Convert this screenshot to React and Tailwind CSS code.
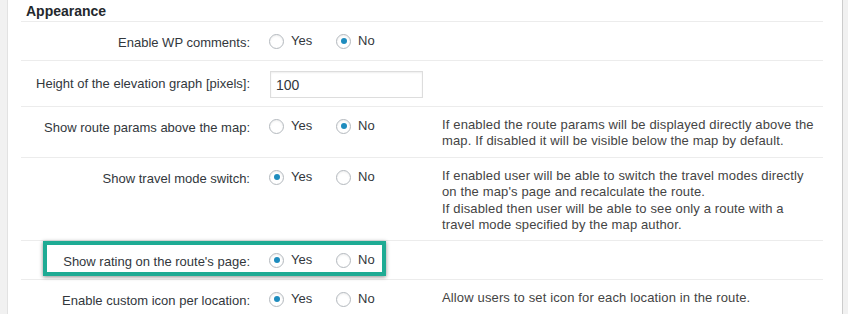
import React from "react";

const font = { fontFamily: '"Liberation Sans", Arial, sans-serif' };

function Radio({ checked }) {
    return (
        <span className="inline-flex h-[15px] w-[15px] items-center justify-center rounded-full border border-[#b4b9be] bg-white shadow-[inset_0_1px_2px_rgba(0,0,0,0.07)]">
            {checked && <span className="h-[6px] w-[6px] rounded-full bg-[#1e8cbe]" />}
        </span>
    );
}

function YesNo({ value }) {
    return (
        <div className="flex items-center">
            <label className="flex w-[67px] items-center gap-[7px]">
                <Radio checked={value === "yes"} />
                <span>Yes</span>
            </label>
            <label className="flex items-center gap-[7px]">
                <Radio checked={value === "no"} />
                <span>No</span>
            </label>
        </div>
    );
}

function Row({ label, height, children, desc, last }) {
    return (
        <div className={`flex ${height} ${last ? "" : "border-b border-[#ececec]"}`}>
            <div className="w-[229px] shrink-0 pt-[13px] text-right leading-4 text-[#32373c]">{label}</div>
            <div className="w-[191px] shrink-0 pl-[19px] pt-[11px] leading-4 text-[#32373c]">{children}</div>
            {desc && (
                <div className="pl-[1px] pt-[10px] leading-[16.3px] tracking-[0.14px] text-[#444]">
                    {desc.map((line) => (
                        <div key={line}>{line}</div>
                    ))}
                </div>
            )}
        </div>
    );
}

export default function App() {
    return (
        <div className="flex h-[314px] w-[848px] overflow-hidden bg-[#f1f1f1] text-[13px]" style={font}>
            <div className="w-[8px] shrink-0 border-r border-[#e2e2e2]" />
            <div className="relative w-[834px] shrink-0 bg-white pl-[13px]">
                <div className="w-[802px]">
                    <h2 className="h-[22px] border-b border-[#ececec] pl-[5px] pt-[3px] text-[14px] font-bold leading-4 text-[#23282d]">
                        Appearance
                    </h2>

                    <Row label="Enable WP comments:" height="h-[39px]">
                        <YesNo value="no" />
                    </Row>

                    <div className="flex h-[46px] border-b border-[#ececec]">
                        <div className="w-[229px] shrink-0 pt-[15px] text-right leading-4 text-[#32373c]">
                            Height of the elevation graph [pixels]:
                        </div>
                        <div className="pl-[20px] pt-[10px]">
                            <input
                                type="text"
                                defaultValue="100"
                                className="h-[27px] w-[153px] border border-[#dddddd] px-[5px] text-[14px] text-[#32373c] shadow-[inset_0_1px_2px_rgba(0,0,0,0.07)] outline-none"
                                style={font}
                            />
                        </div>
                    </div>

                    <Row
                        label="Show route params above the map:"
                        height="h-[51px]"
                        desc={[
                            "If enabled the route params will be displayed directly above the",
                            "map. If disabled it will be visible below the map by default.",
                        ]}
                    >
                        <YesNo value="no" />
                    </Row>

                    <Row
                        label="Show travel mode switch:"
                        height="h-[83px]"
                        desc={[
                            "If enabled user will be able to switch the travel modes directly",
                            "on the map's page and recalculate the route.",
                            "If disabled then user will be able to see only a route with a",
                            "travel mode specified by the map author.",
                        ]}
                    >
                        <YesNo value="yes" />
                    </Row>

                    <Row label="Show rating on the route's page:" height="h-[39px]">
                        <YesNo value="yes" />
                    </Row>

                    <Row
                        label="Enable custom icon per location:"
                        height="h-[40px]"
                        desc={["Allow users to set icon for each location in the route."]}
                        last
                    >
                        <YesNo value="yes" />
                    </Row>
                </div>

                {/* highlight annotation */}
                <div className="pointer-events-none absolute left-[35px] top-[241px] h-[35px] w-[343px] border-[4px] border-[#1eab94] shadow-[0_1px_4px_rgba(0,0,0,0.45)]" />
            </div>
            <div className="w-[6px] shrink-0 border-l border-[#cccccc]" />
        </div>
    );
}
